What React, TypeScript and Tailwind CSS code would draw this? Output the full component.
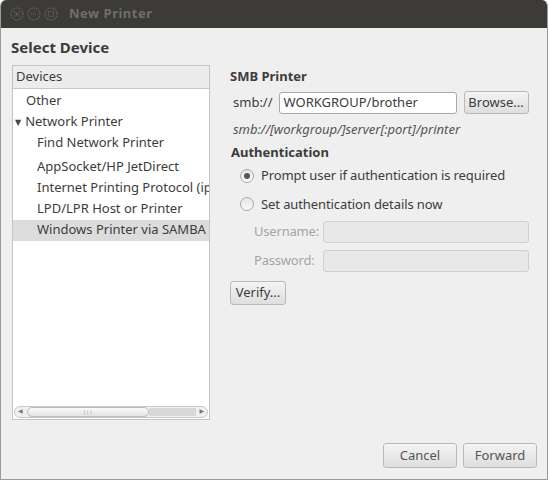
import type React from "react"

const font = { fontFamily: '"Noto Sans", "DejaVu Sans", sans-serif' }

const TitleButton: React.FC<{ kind: "close" | "min" | "max" }> = ({ kind }) => (
  <svg width="14" height="14" viewBox="0 0 14 14">
    <circle cx="7" cy="7" r="6" fill="none" stroke="#6b6a66" strokeWidth="1.2" strokeDasharray="1 1" />
    {kind === "close" && <path d="M4.5 4.5 L9.5 9.5 M9.5 4.5 L4.5 9.5" stroke="#6b6a66" strokeWidth="1.2" strokeDasharray="1 1" />}
    {kind === "min" && <path d="M4 7 H10" stroke="#6b6a66" strokeWidth="1.2" strokeDasharray="1 1" />}
    {kind === "max" && <rect x="4.5" y="4.5" width="5" height="5" fill="none" stroke="#6b6a66" strokeWidth="1.2" strokeDasharray="1 1" />}
  </svg>
)

const DeviceRow: React.FC<{ label: string; indent: number; selected?: boolean; arrow?: boolean }> = ({
  label,
  indent,
  selected,
  arrow,
}) => (
  <div
    className={`flex h-[21px] items-center text-[13px] text-[#3c3c3c] ${selected ? "bg-[#dcdcdc]" : ""}`}
    style={{ paddingLeft: indent }}
  >
    {arrow && <span className="-ml-[12px] mr-[4px] text-[8px] text-[#444]">▼</span>}
    <span className="whitespace-nowrap">{label}</span>
  </div>
)

const Button: React.FC<{ label: string; className?: string; disabled?: boolean }> = ({ label, className, disabled }) => (
  <div
    className={`flex items-center justify-center rounded-[3px] border border-[#b9b9b9] bg-gradient-to-b from-[#f4f4f4] to-[#dedede] text-[13px] ${
      disabled ? "text-[#555]" : "text-[#3c3c3c]"
    } ${className ?? ""}`}
  >
    {label}
  </div>
)

const Radio: React.FC<{ checked?: boolean; label: string }> = ({ checked, label }) => (
  <div className="flex items-center gap-[7px] pl-[10px] text-[13px] tracking-[-0.1px] text-[#3c3c3c]">
    <div className="flex h-[14px] w-[14px] items-center justify-center rounded-full border border-[#a8a8a8] bg-gradient-to-b from-[#e6e6e6] to-[#fafafa]">
      {checked && <div className="h-[6px] w-[6px] rounded-full bg-[#555]" />}
    </div>
    <span>{label}</span>
  </div>
)

export default function App() {
  return (
    <div className="h-[481px] w-[550px] bg-white" style={font}>
      <div className="flex h-[480px] w-[548px] flex-col overflow-hidden rounded-t-[6px] border-b border-l border-r border-[#9a9a9a] bg-[#efefef]">
        <div className="flex h-[28px] items-center gap-[3px] bg-[#3c3b37] pl-[9px]">
          <TitleButton kind="close" />
          <TitleButton kind="min" />
          <TitleButton kind="max" />
          <span className="ml-[8px] text-[13px] font-bold tracking-[0.5px] text-[#6f6e6a]">New Printer</span>
        </div>

        <div className="px-[10px] pt-[8px]">
          <h1 className="text-[15px] font-bold text-[#3c3c3c]">Select Device</h1>
        </div>

        <div className="flex flex-1 gap-[20px] pl-[11px] pt-[6px]">
          {/* device list */}
          <div className="flex h-[355px] w-[198px] flex-col border border-[#c4c4c4] bg-white">
            <div className="flex h-[23px] shrink-0 items-center border-b border-[#c4c4c4] bg-[#ececec] pl-[3px] text-[13px] text-[#3c3c3c]">
              Devices
            </div>
            <div className="flex-1 overflow-hidden pt-[2px]">
              <DeviceRow label="Other" indent={13} />
              <DeviceRow label="Network Printer" indent={14} arrow />
              <DeviceRow label="Find Network Printer" indent={24} />
              <div className="h-[3px]" />
              <DeviceRow label="AppSocket/HP JetDirect" indent={24} />
              <DeviceRow label="Internet Printing Protocol (ipp)" indent={24} />
              <DeviceRow label="LPD/LPR Host or Printer" indent={24} />
              <DeviceRow label="Windows Printer via SAMBA" indent={24} selected />
            </div>
            <div className="mx-[1px] mb-[1px] flex h-[12px] items-center rounded-full border border-[#c8c8c8] bg-[#f0f0f0]">
              <span className="ml-[3px] text-[6px] text-[#777]">◀</span>
              <div className="ml-[4px] flex h-[10px] w-[122px] items-center justify-center rounded-full border border-[#bdbdbd] bg-gradient-to-b from-[#fafafa] to-[#e4e4e4]">
                <span className="text-[6px] leading-none text-[#999]">|||</span>
              </div>
              <div className="h-[8px] flex-1 bg-[#d8d8d8]" />
              <span className="ml-[3px] mr-[3px] text-[6px] text-[#777]">▶</span>
            </div>
          </div>

          {/* right panel */}
          <div className="flex flex-1 flex-col pr-[18px] pt-[2px] text-[#3c3c3c]">
            <div className="text-[13px] font-bold">SMB Printer</div>
            <div className="mt-[5px] flex items-center pl-[3px]">
              <span className="text-[13px]">smb://</span>
              <div className="ml-[6px] flex h-[22px] w-[178px] items-center rounded-[3px] border border-[#a9a9a9] bg-white pl-[4px] text-[13px]">
                WORKGROUP/brother
              </div>
              <Button label="Browse..." className="ml-[7px] h-[23px] w-[65px]" />
            </div>
            <div className="mt-[6px] pl-[3px] text-[13px] italic text-[#555]">smb://[workgroup/]server[:port]/printer</div>
            <div className="mt-[3px] pl-[1px] text-[13px] font-bold">Authentication</div>
            <div className="mt-[4px]">
              <Radio checked label="Prompt user if authentication is required" />
            </div>
            <div className="mt-[9px]">
              <Radio label="Set authentication details now" />
            </div>
            <div className="mt-[7px] grid grid-cols-[auto_1fr] items-center gap-x-[4px] gap-y-[7px] pl-[24px]">
              <span className="text-[13px] tracking-[-0.2px] text-[#a5a5a5]">Username:</span>
              <div className="h-[22px] rounded-[3px] border border-[#cfcfcf] bg-[#e8e8e8]" />
              <span className="text-[13px] tracking-[-0.2px] text-[#a5a5a5]">Password:</span>
              <div className="h-[22px] rounded-[3px] border border-[#cfcfcf] bg-[#e8e8e8]" />
            </div>
            <Button label="Verify..." className="mt-[9px] h-[24px] w-[56px]" />
          </div>
        </div>

        <div className="flex justify-end gap-[6px] pb-[11px] pr-[10px]">
          <Button label="Cancel" disabled className="h-[25px] w-[74px] from-[#dedede] to-[#d2d2d2]" />
          <Button label="Forward" disabled className="h-[25px] w-[74px] from-[#dedede] to-[#d2d2d2]" />
        </div>
      </div>
    </div>
  )
}
